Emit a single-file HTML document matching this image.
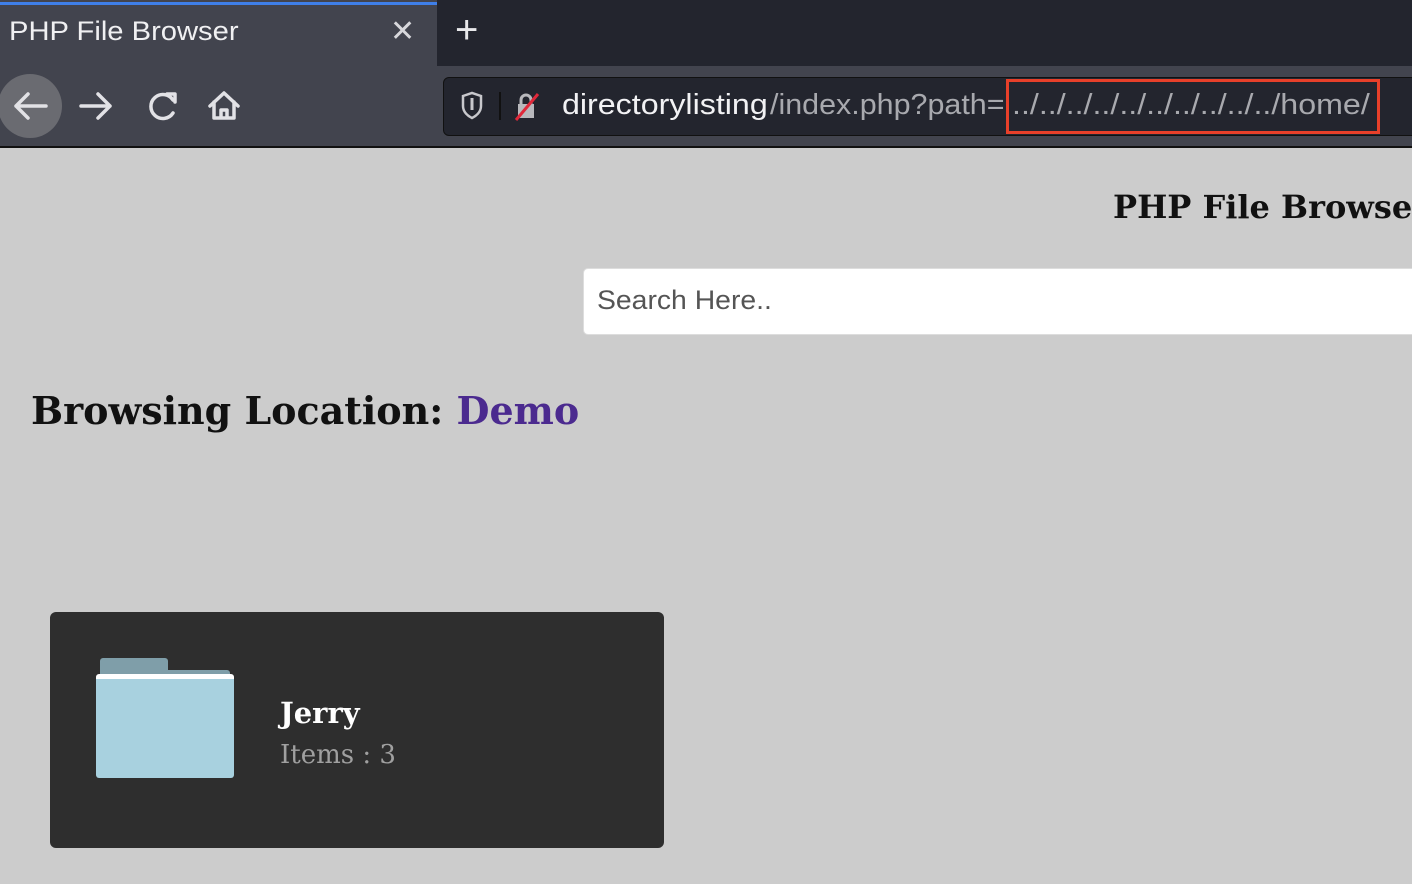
<!DOCTYPE html><html><head><style>
body{margin:0;width:1412px;height:884px;overflow:hidden;background:#cccccc;position:relative;font-family:"DejaVu Serif",serif}
.a{position:absolute}
.ui{font-family:"Liberation Sans",sans-serif;white-space:nowrap;transform-origin:left}
</style></head><body>
<div class="a" style="left:0;top:0;width:1412px;height:66px;background:#23252e"></div>
<div class="a" style="left:0;top:0;width:437px;height:66px;background:#42444e"></div>
<div class="a" style="left:0;top:2px;width:437px;height:3px;background:#3f7fe8"></div>
<div class="a ui" style="left:9px;top:16px;font-size:27px;color:#f0f0f2;transform:scaleX(1.08)">PHP File Browser</div>
<div class="a ui" style="left:390px;top:14px;font-size:30px;color:#d8d8dc">✕</div>
<div class="a ui" style="left:455px;top:8px;font-size:40px;color:#e8e8ea">+</div>
<div class="a" style="left:0;top:66px;width:1412px;height:80px;background:#42444e"></div>
<div class="a" style="left:0;top:146px;width:1412px;height:2px;background:#111"></div>
<div class="a" style="left:-2px;top:74px;width:64px;height:64px;border-radius:50%;background:#6a6b71"></div>
<svg class="a" style="left:0;top:80px" width="260" height="56" viewBox="0 0 260 56" fill="none" stroke="#e2e2e6" stroke-width="3.5" stroke-linecap="round" stroke-linejoin="round">
<path d="M46 26H16M28 14L16 26L28 38"/>
<path d="M81 26H110M98 14L110 26L98 38"/>
<path d="M173 20A12 12 0 1 0 173 33"/><path d="M167 14H175V22"/>
<path d="M210 26L224 13L238 26M214 22V38H234V22M221 38V30H227V38"/>
</svg>
<div class="a" style="left:443px;top:77px;width:975px;height:57px;background:#23252e;border:1px solid #111;border-radius:6px"></div>
<svg class="a" style="left:458px;top:90px" width="90" height="32" fill="none">
<path d="M5 6L14 3L23 6V16C23 22 18 26 14 28C10 26 5 22 5 16Z" stroke="#c8c8cc" stroke-width="2.5"/><path d="M14 8V20" stroke="#c8c8cc" stroke-width="3"/>
<line x1="42" y1="2" x2="42" y2="30" stroke="#111" stroke-width="2"/>
<rect x="60" y="14" width="16" height="14" fill="#b8b8bc"/><path d="M63 14V10A5 5 0 0 1 73 10V14" stroke="#b8b8bc" stroke-width="3"/>
<path d="M58 30L80 4" stroke="#e0283a" stroke-width="3"/>
</svg>
<div class="a ui" style="left:562px;top:89px;font-size:29px;color:#f2f2f4;transform:scaleX(1.11)">directorylisting</div>
<div class="a ui" style="left:770px;top:89px;font-size:29px;color:#a8a9ae;transform:scaleX(1.05)">/index.php?path=</div>
<div class="a ui" style="left:1012px;top:89px;font-size:29px;color:#a8a9ae;transform:scaleX(1.11)">../../../../../../../../../../home/</div>
<div class="a" style="left:1006px;top:79px;width:368px;height:49px;border:3px solid #e8402a"></div>
<div class="a" style="left:1113px;top:188px;font-size:32px;font-weight:bold;white-space:nowrap;color:#111">PHP File Browser</div>
<div class="a" style="left:583px;top:268px;width:840px;height:65px;background:#fff;border:1px solid #ddd;border-radius:5px"></div>
<div class="a ui" style="left:597px;top:285px;font-size:27px;color:#555;transform:scaleX(1.05)">Search Here..</div>
<div class="a" style="left:31px;top:388px;font-size:38px;font-weight:bold;color:#111;white-space:nowrap">Browsing Location: <span style="color:#4b2a8f">Demo</span></div>
<div class="a" style="left:50px;top:612px;width:614px;height:236px;background:#2e2e2e;border-radius:6px"></div>
<div class="a" style="left:100px;top:658px;width:68px;height:16px;background:#7f9ea9;border-radius:3px 3px 0 0"></div>
<div class="a" style="left:100px;top:670px;width:130px;height:8px;background:#7f9ea9;border-radius:0 3px 0 0"></div>
<div class="a" style="left:96px;top:674px;width:138px;height:104px;background:#a8d1df;border-top:5px solid #fff;border-radius:3px;box-sizing:border-box"></div>
<div class="a" style="left:280px;top:696px;font-size:29px;font-weight:bold;color:#fff">Jerry</div>
<div class="a" style="left:280px;top:740px;font-size:26px;color:#a0a0a0">Items : 3</div>
</body></html>
